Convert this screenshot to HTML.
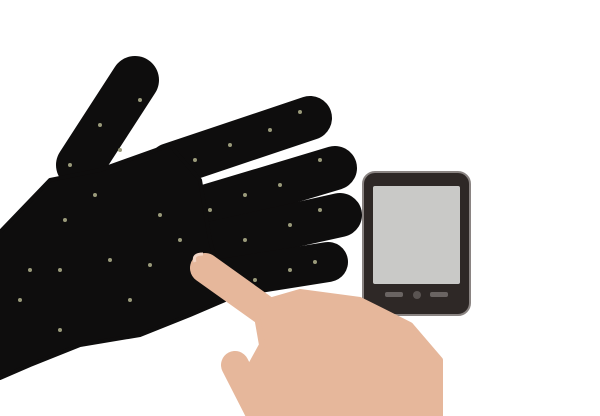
<!DOCTYPE html>
<html><head><style>html,body{margin:0;padding:0;background:#fff;width:600px;height:416px;overflow:hidden}</style></head>
<body>
<svg width="600" height="416" viewBox="0 0 600 416" xmlns="http://www.w3.org/2000/svg">
<rect width="600" height="416" fill="#fff"/>
<g fill="#0e0d0d" stroke="#0e0d0d" stroke-linecap="round" stroke-linejoin="round">
<line x1="80" y1="165" x2="135" y2="80" stroke-width="48"/>
<line x1="170" y1="165" x2="310" y2="118" stroke-width="44"/>
<line x1="195" y1="210" x2="335" y2="168" stroke-width="44"/>
<line x1="205" y1="245" x2="340" y2="215" stroke-width="44"/>
<line x1="215" y1="280" x2="328" y2="262" stroke-width="40"/>
<path d="M0 232 L50 180 L100 170 L170 145 L200 180 L210 240 L225 300 L190 315 L140 335 L80 345 L30 365 L0 378 Z" stroke-width="4"/>
</g>
<g fill="#9a9a7a">
<circle cx="70" cy="165" r="2"/><circle cx="100" cy="125" r="2"/><circle cx="120" cy="150" r="2"/>
<circle cx="140" cy="100" r="2"/><circle cx="65" cy="220" r="2"/><circle cx="95" cy="195" r="2"/>
<circle cx="30" cy="270" r="2"/><circle cx="20" cy="300" r="2"/><circle cx="110" cy="260" r="2"/>
<circle cx="150" cy="265" r="2"/><circle cx="130" cy="300" r="2"/><circle cx="60" cy="330" r="2"/>
<circle cx="195" cy="160" r="2"/><circle cx="230" cy="145" r="2"/><circle cx="270" cy="130" r="2"/><circle cx="300" cy="112" r="2"/>
<circle cx="210" cy="210" r="2"/><circle cx="245" cy="195" r="2"/><circle cx="280" cy="185" r="2"/><circle cx="320" cy="160" r="2"/>
<circle cx="245" cy="240" r="2"/><circle cx="290" cy="225" r="2"/><circle cx="320" cy="210" r="2"/>
<circle cx="255" cy="280" r="2"/><circle cx="290" cy="270" r="2"/><circle cx="315" cy="262" r="2"/>
<circle cx="160" cy="215" r="2"/><circle cx="180" cy="240" r="2"/><circle cx="60" cy="270" r="2"/>
</g>
<rect x="363" y="172" width="107" height="143" rx="12" fill="#2e2826" stroke="#8a8482" stroke-width="2"/>
<rect x="373" y="186" width="87" height="98" rx="2" fill="#c9c9c7"/>
<rect x="385" y="292" width="18" height="5" rx="2" fill="#6a6462"/>
<rect x="430" y="292" width="18" height="5" rx="2" fill="#6a6462"/>
<circle cx="417" cy="295" r="4" fill="#5a5452"/>
<g fill="#e6b79b" stroke="#e6b79b" stroke-linecap="round" stroke-linejoin="round">
<line x1="205" y1="268" x2="275" y2="318" stroke-width="30"/>
<path d="M255 305 L300 292 L360 300 L410 325 L440 360 L440 416 L250 416 L240 385 L262 345 Z" stroke-width="6"/>
<line x1="235" y1="365" x2="258" y2="410" stroke-width="28"/>
</g>
<path d="M195 262 q-3 -8 8 -8" fill="none" stroke="#f3d6c6" stroke-width="3"/>
</svg>
</body></html>
